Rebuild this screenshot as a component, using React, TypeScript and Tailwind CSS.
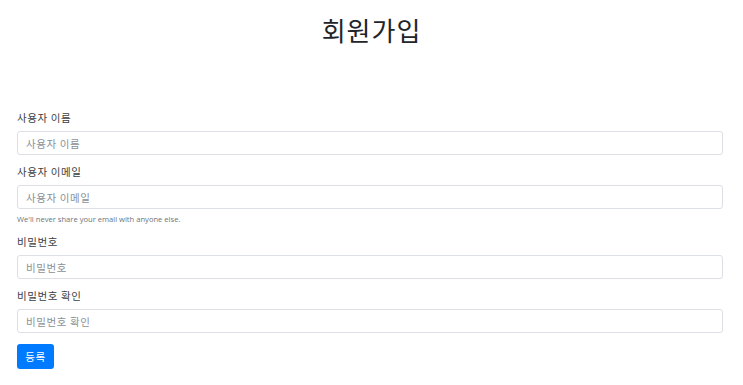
import React from "react";

const fields = [
  { label: "사용자 이름", help: "" },
  { label: "사용자 이메일", help: "We'll never share your email with anyone else." },
  { label: "비밀번호", help: "" },
  { label: "비밀번호 확인", help: "" },
];

const font = { fontFamily: '"Noto Sans CJK KR", "Open Sans", sans-serif' };

export default function App() {
  return (
    <div className="min-h-screen bg-white text-[#212529]" style={font}>
      <h1 className="pt-[14px] text-center text-[26px] font-normal leading-[32px] tracking-[1px]">회원가입</h1>
      <form className="mt-[64px] ml-[17px] mr-[20px]" onSubmit={(e) => e.preventDefault()}>
        {fields.map((f) => (
          <div key={f.label} className="mb-[9px] flex flex-col">
            <label className="mb-[5px] text-[10.5px] leading-[16px] tracking-[0.6px] text-[#3b3f44]">{f.label}</label>
            <input
              type="text"
              placeholder={f.label}
              className="h-[24px] w-full rounded-[3px] border border-[#dcdfe3] px-[8px] text-[10.5px] tracking-[0.6px] placeholder:text-[#8a9096] outline-none"
            />
            {f.help && (
              <small
                className="mt-[4px] text-[7.6px] leading-[12px] text-[#6c757d]"
                style={{ fontFamily: '"Open Sans", sans-serif' }}
              >
                {f.help}
              </small>
            )}
          </div>
        ))}
        <button
          type="submit"
          className="mt-[1px] h-[25px] w-[37px] rounded-[3px] bg-[#007bff] text-[10.5px] tracking-[0.6px] text-white"
        >
          등록
        </button>
      </form>
    </div>
  );
}
